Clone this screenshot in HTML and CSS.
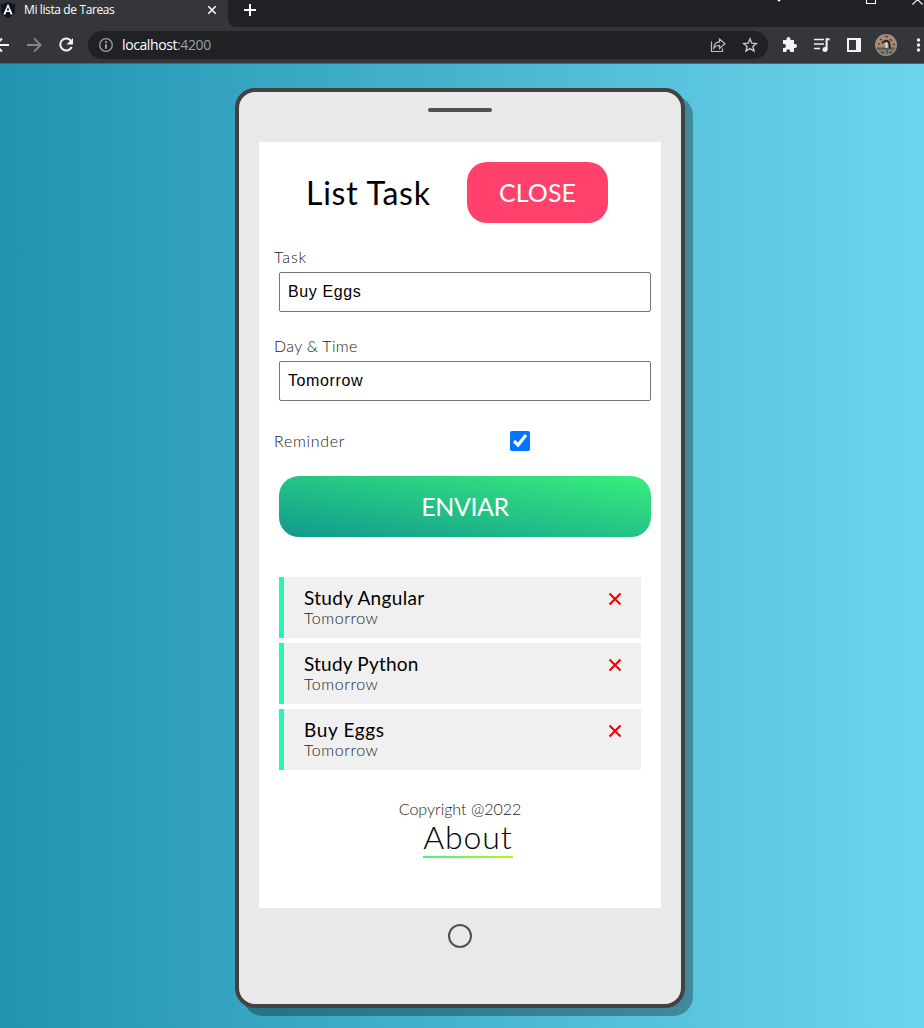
FILE: index.html
```html
<!DOCTYPE html>
<html lang="es">
<head>
<meta charset="utf-8">
<title>Mi lista de Tareas</title>
<link rel="stylesheet" href="styles.css">
</head>
<body>
<header class="browser">
  <div class="tabstrip">
    <div class="tab">
      <svg class="favicon" width="16" height="16" viewBox="0 0 16 16"><path d="M8 0 15.5 2.7 14.3 12.5 8 16 1.7 12.5.5 2.7Z" fill="#10151d"/><path d="M8 1.800 3.200 12.400h2.100l1-2.400h3.400l1 2.400h2.100ZM8 5.100 9.300 8.400H6.700Z" fill="#fff" fill-rule="evenodd"/></svg>
      <span class="tab-title">Mi lista de Tareas</span>
      <svg class="tab-close" width="10" height="10" viewBox="0 0 10 10"><path d="M1.3 1.3l7.4 7.4M8.7 1.3 1.3 8.7" stroke="#fff" stroke-width="1.6"/></svg>
    </div>
    <div class="strip-rest">
      <svg class="new-tab" width="12" height="12" viewBox="0 0 12 12"><path d="M6 0v12M0 6h12" stroke="#fff" stroke-width="2"/></svg>
      <svg class="window-controls" width="148" height="6" viewBox="0 0 148 6"><path d="M1 -1l2 2 2-2" fill="none" stroke="#fff" stroke-width="1.2"/><path d="M90.500 -4v7.500h9v-7.500M136.500 4.500l5-5 5 5" fill="none" stroke="#fff" stroke-width="1.1"/></svg>
    </div>
  </div>
  <div class="toolbar">
    <svg class="nav" width="88" height="36" viewBox="0 0 88 36">
      <path d="M-5 18H9M2 11.500-4.500 18 2 24.500" fill="none" stroke="#f1f3f4" stroke-width="2"/>
      <path d="M27 18H40M34 11.300 40.700 18 34 24.700" fill="none" stroke="#85878a" stroke-width="1.800"/>
      <path d="M71 13.800A6 6 0 1 0 71.700 20" fill="none" stroke="#f1f3f4" stroke-width="2"/><path d="M73 11v6.500H66.500Z" fill="#f1f3f4"/>
    </svg>
    <div class="omnibox">
      <svg width="16" height="16" viewBox="0 0 16 16"><circle cx="8" cy="8" r="6.300" fill="none" stroke="#9aa0a6" stroke-width="1.300"/><path d="M8 4.200v1.700M8 7.200v4.500" stroke="#bdc1c6" stroke-width="1.600"/></svg>
      <span class="url">localhost<span class="port">:4200</span></span>
      <svg class="share" width="16" height="16" viewBox="0 0 16 16" fill="none" stroke="#bdc1c6" stroke-width="1.200"><path d="M1.500 4.500v10h11v-3M9.500 2v2.800C6 5 4 7.200 3.800 11.200c1.400-2 3.200-2.800 5.700-2.700v2.900L15 6.700Z"/></svg>
      <svg width="16" height="16" viewBox="0 0 16 16"><path d="M8 1.900 9.800 6.200 14.400 6.500 10.900 9.500 12 14 8 11.600 4 14 5.100 9.500 1.600 6.500 6.200 6.200Z" fill="none" stroke="#c4c7cc" stroke-width="1.400"/></svg>
    </div>
    <svg class="extensions" width="156" height="36" viewBox="0 0 156 36">
      <path d="M15 13h3.500v-1a2 2 0 0 1 4 0v1H26v4h1a2 2 0 0 1 0 4h-1v4h-4v-1a1.800 1.800 0 0 0-3.600 0v1H15v-4h1a2 2 0 0 0 0-4h-1Z" fill="#f1f3f4"/>
      <path d="M46 12.500H56M46 17H56M46 21.500H52" stroke="#f1f3f4" stroke-width="1.700"/><path d="M58.600 22.500V12.300h3" fill="none" stroke="#f1f3f4" stroke-width="2"/><circle cx="57" cy="22.500" r="2.500" fill="#f1f3f4"/>
      <path d="M79 11h14v14H79ZM81 13v10h7V13Z" fill="#f1f3f4" fill-rule="evenodd"/>
      <circle cx="118" cy="18" r="11" fill="#a88c7a"/>
      <path d="M108 20.500h20q-1 7-10 8.500-8-1.500-10-8.500Z" fill="#8b7d6e"/><path d="M109 21.500h17" stroke="#4b5a4c" stroke-width="2"/><path d="M112 12l2 1M117 9l3 1M122 12l2 2M110 17l2 0M125 17l2 1M113 25l3 1M121 26l3-1" stroke="#57453b" stroke-width="1.500"/><path d="M114 16q4-4 7-1l1 6" fill="none" stroke="#24221f" stroke-width="1.800"/><path d="M118.500 16v5" stroke="#e8e2dc" stroke-width="2"/><path d="M119 22v5" stroke="#2669a5" stroke-width="2"/>
      <g fill="#f1f3f4"><circle cx="150.500" cy="13" r="1.700"/><circle cx="150.500" cy="18" r="1.700"/><circle cx="150.500" cy="23" r="1.700"/></g>
    </svg>
  </div>
</header>
<main class="page">
  <div class="phone">
    <div class="speaker"></div>
    <section class="screen">
      <div class="heading">
        <h1 class="title">List Task</h1>
        <button class="btn btn-close"><span>CLOSE</span></button>
      </div>
      <form class="task-form">
        <label class="label label-task" for="task">Task</label>
        <input class="field" id="task" type="text" value="Buy Eggs">
        <label class="label label-day" for="day">Day &amp; Time</label>
        <input class="field" id="day" type="text" value="Tomorrow">
        <div class="reminder">
          <label class="label label-reminder" for="reminder">Reminder</label>
          <input class="check" id="reminder" type="checkbox" checked>
        </div>
        <button class="btn btn-send" type="button"><span>ENVIAR</span></button>
      </form>
      <div class="tasks">
        <article class="task">
          <div><h3 class="name name-angular">Study Angular</h3><p class="when">Tomorrow</p></div>
          <svg class="remove" width="14" height="14" viewBox="0 0 14 14"><path d="M1.500 1.500l11 11M12.500 1.500l-11 11"/></svg>
        </article>
        <article class="task">
          <div><h3 class="name name-python">Study Python</h3><p class="when">Tomorrow</p></div>
          <svg class="remove" width="14" height="14" viewBox="0 0 14 14"><path d="M1.500 1.500l11 11M12.500 1.500l-11 11"/></svg>
        </article>
        <article class="task">
          <div><h3 class="name name-eggs">Buy Eggs</h3><p class="when">Tomorrow</p></div>
          <svg class="remove" width="14" height="14" viewBox="0 0 14 14"><path d="M1.500 1.500l11 11M12.500 1.500l-11 11"/></svg>
        </article>
      </div>
      <footer class="footer">
        <p class="copyright">Copyright @2022</p>
        <a class="about">About</a>
      </footer>
    </section>
    <div class="home"></div>
  </div>
</main>
</body>
</html>
```
FILE: styles.css
```css
* { box-sizing: border-box; }
body {
  margin: 0;
  height: 1028px;
  overflow: hidden;
  display: flex;
  flex-direction: column;
  font-family: Lato, "Open Sans", sans-serif;
  font-weight: 300;
  color: #000;
}
h1, h3, p { margin: 0; font-weight: 400; }
svg { flex: none; display: block; }

.browser { height: 64px; background: #35363a; border-bottom: 1px solid #5b5c60; flex: none; }
.tabstrip { height: 27px; display: flex; }
.tab { width: 228px; display: flex; align-items: center; padding: 0 11px 7px 0; color: #fff; }
.tab-title { font: 400 12px/16px "Open Sans", sans-serif; letter-spacing: -0.38px; margin-left: 8px; flex: 1; white-space: nowrap; }
.strip-rest { flex: 1; background: #202124; border-bottom-left-radius: 8px; display: flex; justify-content: space-between; padding-left: 16px; }
.new-tab { margin-top: 4px; }
.toolbar { height: 36px; display: flex; align-items: center; }
.omnibox { width: 680px; height: 28px; border-radius: 14px; background: #202124; display: flex; align-items: center; padding: 0 10px; }
.url { font: 400 14px/20px "Open Sans", sans-serif; letter-spacing: -0.4px; color: #fff; margin-left: 8px; flex: 1; }
.port { color: #9aa0a6; }
.share { margin-right: 16px; }

.page { flex: 1; background: linear-gradient(to right, #2193b0, #6dd5ed); padding: 24px 0 0 235px; }
.phone {
  width: 450px;
  height: 920px;
  border: 4px solid #424242;
  border-radius: 20px;
  background: #e9e9e9;
  box-shadow: 8px 8px 0 rgba(0, 0, 0, 0.3);
  padding: 16px 20px 0;
}
.speaker { width: 64px; height: 4px; border-radius: 2px; background: #505050; margin: 0 auto 30px 169px; }
.screen { width: 402px; height: 766px; background: #fff; padding: 20px 10px 0 15px; }
.home { width: 24px; height: 24px; border: 2px solid #505050; border-radius: 50%; margin: 16px 0 0 189px; }

.heading { display: flex; height: 61px; align-items: center; padding-left: 32px; }
.title { width: 161px; font-size: 32px; line-height: 40px; letter-spacing: 0.75px; white-space: nowrap; }
.btn { border: 0; padding: 0 0 2px; height: 61px; border-radius: 20px; color: #fff; font: 400 25px/30px Lato, sans-serif; }
.btn-close { width: 141px; background: #ff416c; letter-spacing: 0.1px; }

.task-form { display: flex; flex-direction: column; margin-top: 24px; }
.label { font-size: 16px; line-height: 20px; color: #222; align-self: flex-start; }
.label-task { letter-spacing: 0.9px; }
.field {
  width: 372px;
  height: 40px;
  margin: 5px 0 0 5px;
  border: 1px solid #767676;
  border-radius: 2px;
  padding: 0 8px;
  background: #fff;
  color: #000;
  font: 16px "Liberation Sans", Arial, sans-serif;
  letter-spacing: 0.6px;
}
.label-day { margin-top: 24px; letter-spacing: 0.3px; }
.reminder { height: 20px; margin-top: 30px; display: flex; align-items: center; }
.label-reminder { width: 236px; letter-spacing: 0.7px; }
.check { width: 20px; height: 20px; margin: 0; }
.btn-send { width: 372px; margin: 25px 0 0 5px; background: linear-gradient(to top right, #11998e, #38ef7d); letter-spacing: -0.4px; }

.tasks { margin: 40px 10px 0 5px; display: grid; gap: 5px; }
.task { height: 61px; border-left: 5px solid #26f6b5; background: #f0f0f0; padding: 10px 19px 0 20px; display: flex; justify-content: space-between; }
.name { font-size: 19px; line-height: 21px; }
.name-angular { letter-spacing: 0.33px; }
.name-python { letter-spacing: 0.2px; }
.name-eggs { letter-spacing: 0.65px; }
.when { font-size: 16px; line-height: 19px; font-weight: 300; color: #222; letter-spacing: 0.55px; }
.remove { margin-top: 5px; fill: none; stroke: #f50000; stroke-width: 2.1; }

.footer { display: flex; flex-direction: column; align-items: center; margin-top: 29px; padding-right: 5px; }
.copyright { font-size: 16px; line-height: 20px; font-weight: 300; color: #222; }
.about { width: 90px; margin-left: 16px; font-size: 32px; line-height: 35px; height: 39px; letter-spacing: 0.9px; white-space: nowrap; text-align: center; border-bottom: 2px solid; border-image: linear-gradient(to right, #3cf585, #b4fa14) 1; }
```
